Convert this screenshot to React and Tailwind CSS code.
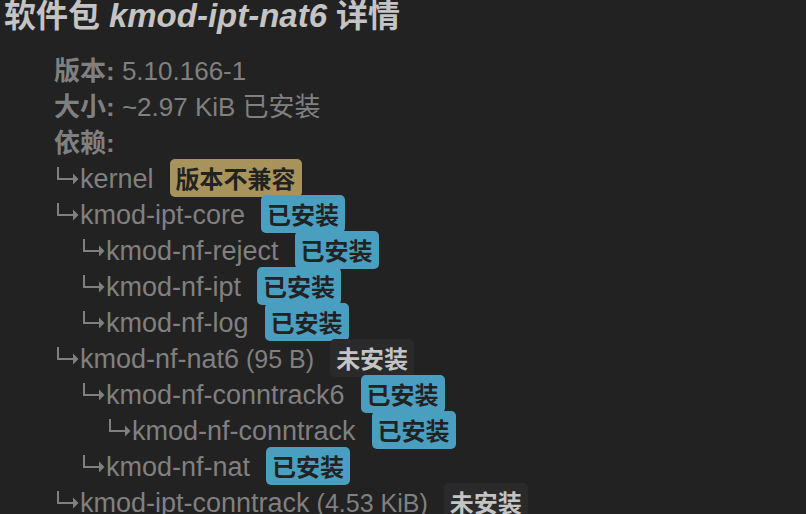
const STATUS = {
  installed: { text: '已安装', style: 'bg-[#4a9fc0] text-[#222222]' },
  missing: { text: '未安装', style: 'bg-[#2a2a2a] text-[#c4c4c4]' },
  incompatible: { text: '版本不兼容', style: 'bg-[#a8935c] text-[#222222]' },
};

const DEPENDENCIES = [
  { name: 'kernel', status: 'incompatible' },
  {
    name: 'kmod-ipt-core',
    status: 'installed',
    children: [
      { name: 'kmod-nf-reject', status: 'installed' },
      { name: 'kmod-nf-ipt', status: 'installed' },
      { name: 'kmod-nf-log', status: 'installed' },
    ],
  },
  {
    name: 'kmod-nf-nat6',
    size: '95 B',
    status: 'missing',
    children: [
      {
        name: 'kmod-nf-conntrack6',
        status: 'installed',
        children: [{ name: 'kmod-nf-conntrack', status: 'installed' }],
      },
      { name: 'kmod-nf-nat', status: 'installed' },
    ],
  },
  { name: 'kmod-ipt-conntrack', size: '4.53 KiB', status: 'missing' },
];

function BranchArrow() {
  return (
    <svg className="h-9 w-[26px] shrink-0" viewBox="0 0 26 36" fill="none" aria-hidden="true">
      <path d="M4 6V18H20" stroke="currentColor" strokeWidth="2" />
      <path d="M19 12.5L24.5 18L19 23.5Z" fill="currentColor" />
    </svg>
  );
}

function Badge({ status }) {
  const { text, style } = STATUS[status];
  return (
    <span className={`-mt-0.5 h-[38px] rounded-[5px] px-1.5 text-[24px] leading-[41px] font-bold ${style}`}>
      {text}
    </span>
  );
}

function DependencyList({ items, nested }) {
  return (
    <ul className={nested ? 'pl-[26px]' : ''}>
      {items.map((item) => (
        <li key={item.name}>
          <div className="flex h-9 items-start whitespace-nowrap">
            <BranchArrow />
            <span className="mr-4 text-[27px] leading-9">
              {item.name}
              {item.size && <span className="text-[25px]"> ({item.size})</span>}
            </span>
            <Badge status={item.status} />
          </div>
          {item.children && <DependencyList items={item.children} nested />}
        </li>
      ))}
    </ul>
  );
}

export default function App() {
  return (
    <main className="h-screen overflow-hidden bg-[#222222] font-['Liberation_Sans','Noto_Sans_CJK_SC',sans-serif] text-[26px] leading-9 text-[#808080]">
      <h4 className="pl-1 text-[32px] leading-8 font-bold text-[#c4c4c4]">
        软件包 <em className="text-[33px]">kmod-ipt-nat6</em> 详情
      </h4>
      <section className="pt-[21px] pl-[54px]">
        <p>
          <strong>版本:</strong> 5.10.166-1
        </p>
        <p>
          <strong>大小:</strong> ~2.97 KiB 已安装
        </p>
        <p>
          <strong>依赖:</strong>
        </p>
        <DependencyList items={DEPENDENCIES} />
      </section>
    </main>
  );
}
